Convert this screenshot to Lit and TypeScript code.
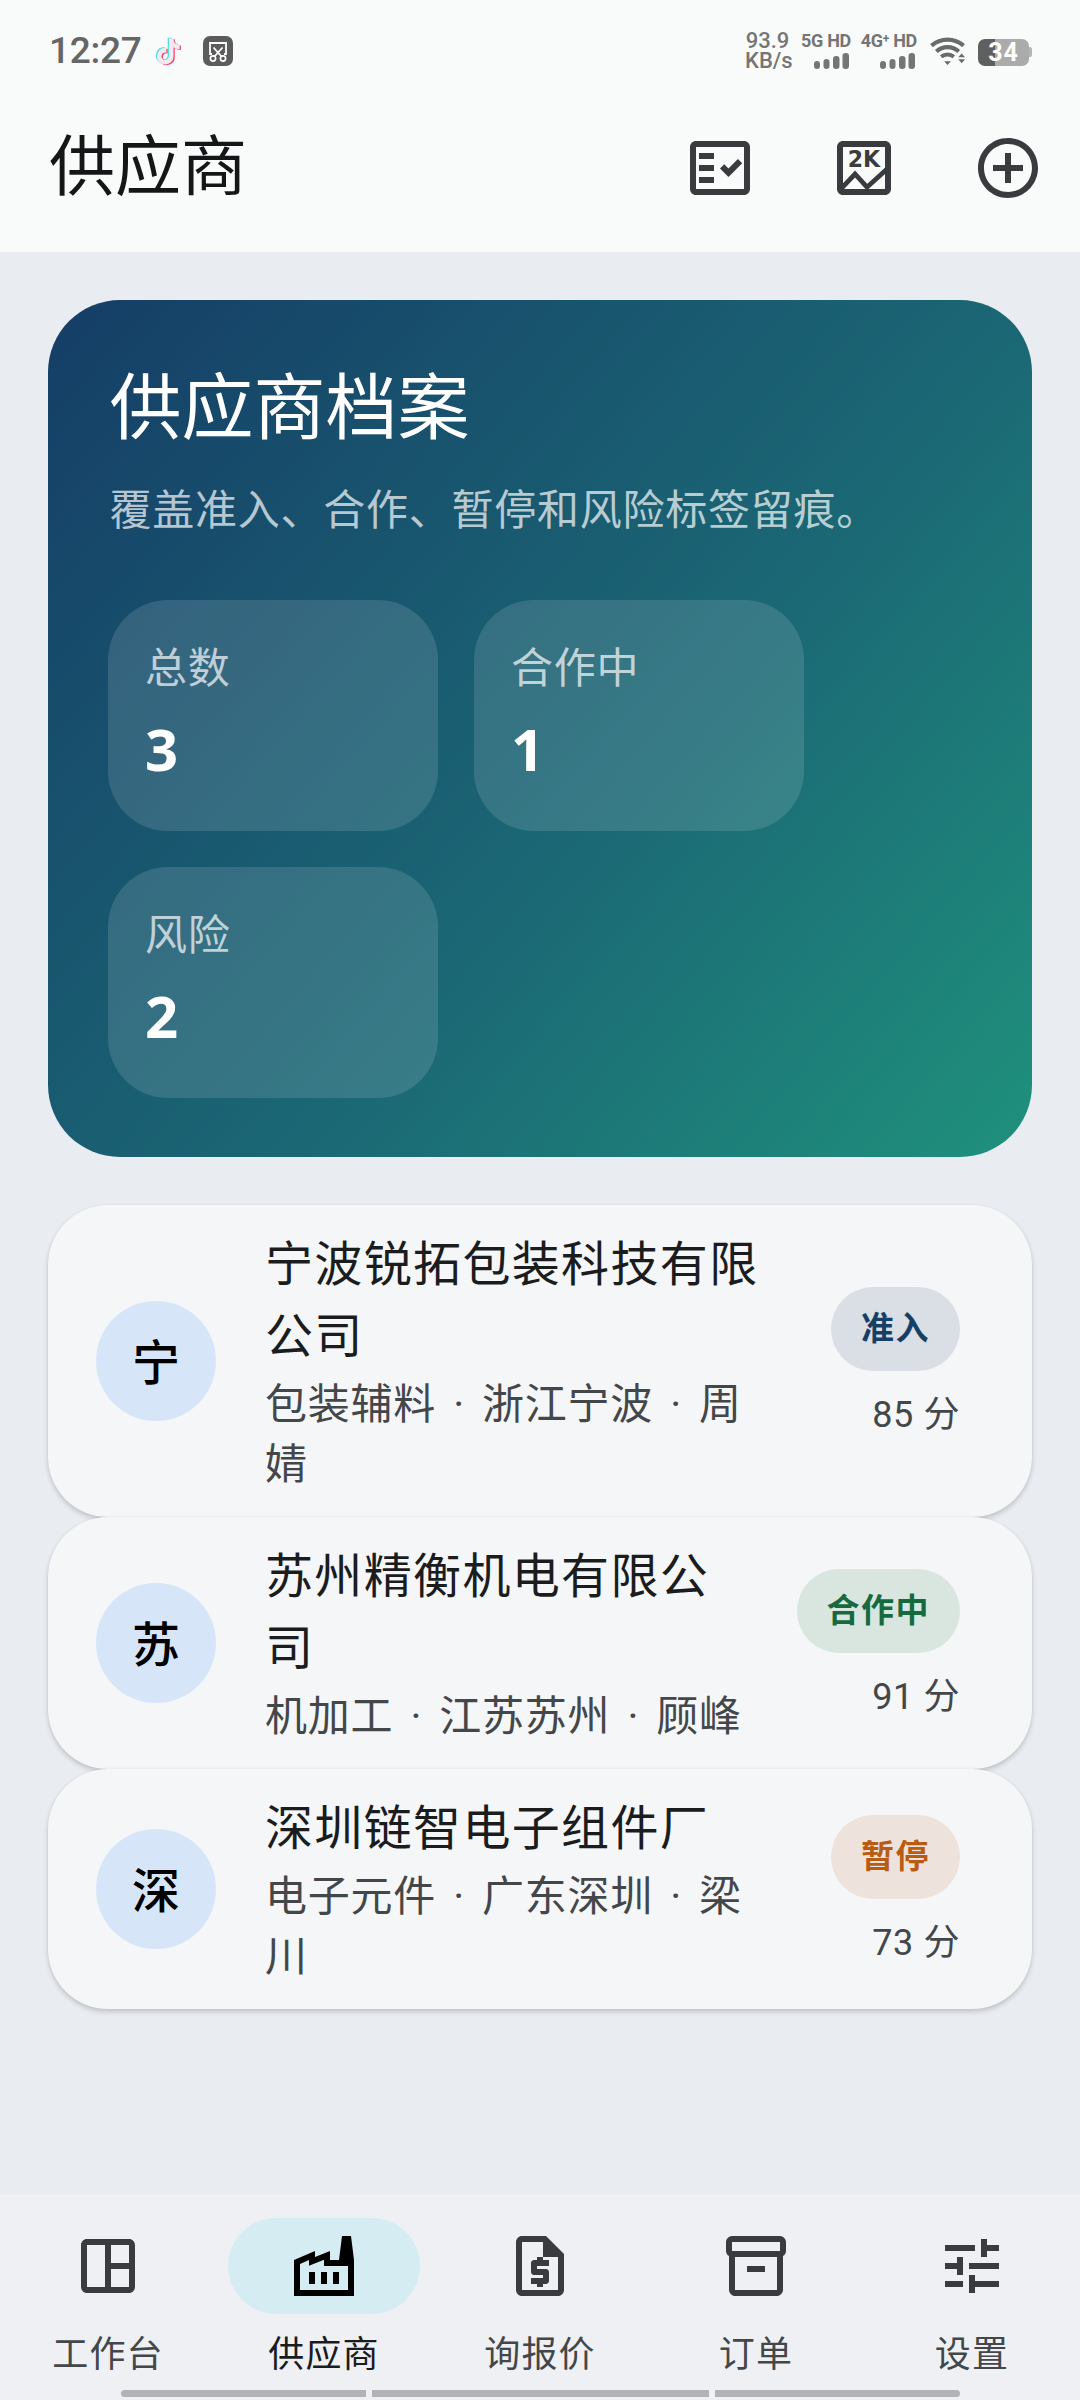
import { LitElement, html, css } from "lit";
import { customElement } from "lit/decorators.js";

const icon = (d: string, cls = "icon") => html`<svg class=${cls} viewBox="0 0 24 24"><path fill-rule="evenodd" d=${d}></path></svg>`;

const P = {
  fact: "M20 3H4C2.9 3 2 3.9 2 5v14c0 1.1.9 2 2 2h16c1.1 0 2-.9 2-2V5c0-1.1-.9-2-2-2zM20 19H4V5h16v14zM19.41 10.42L17.99 9l-3.17 3.17-1.41-1.42L12 12.16 14.83 15l4.58-4.58zM5 7h5v2H5zM5 11h5v2H5zM5 15h5v2H5z",
  add: "M13 7h-2v4H7v2h4v4h2v-4h4v-2h-4V7zM12 2C6.48 2 2 6.48 2 12s4.48 10 10 10 10-4.48 10-10S17.52 2 12 2zM12 20c-4.41 0-8-3.59-8-8s3.59-8 8-8 8 3.59 8 8-3.59 8-8 8z",
  dash: "M19 3H5c-1.1 0-2 .9-2 2v14c0 1.1.9 2 2 2h14c1.1 0 2-.9 2-2V5c0-1.1-.9-2-2-2zM5 5h6v14H5zM13 5h6v6h-6zM13 13h6v6h-6z",
  factory: "M22 22H2V10l7-3v2l5-2v3h3l1-8h3l1 8v12zM12 9.95l-5 2V10l-3 1.32V20h16v-8h-8V9.95zM11 18h2v-4h-2v4zM7 18h2v-4H7v4zM17 14h-2v4h2v-4z",
  quote: "M14 2H6C4.9 2 4.01 2.9 4.01 4L4 20c0 1.1.89 2 1.99 2H18c1.1 0 2-.9 2-2V8l-6-6zM6 20V4h7v5h5v11H6zM11 19h2v-1h1c.55 0 1-.45 1-1v-3c0-.55-.45-1-1-1h-3v-1h4v-2h-2V9h-2v1h-1c-.55 0-1 .45-1 1v3c0 .55.45 1 1 1h3v1H9v2h2v1z",
  box: "M20 2H4C3 2 2 3 2 4v3.01c0 .72.43 1.34 1 1.69V20c0 1.1 1.1 2 2 2h14c.9 0 2-.9 2-2V8.7c.57-.35 1-.97 1-1.69V4c0-1-1-2-2-2zM19 20H5V9h14v11zM20 7H4V4h16v3zM9 12h6v2H9z",
  tune: "M3 17v2h6v-2H3zM3 5v2h10V5H3zM13 21v-2h8v-2h-8v-2h-2v6h2zM7 9v2H3v2h4v2h2V9H7zM21 13v-2H11v2h10zM15 9h2V7h4V5h-4V3h-2v6z",
  note: "M19.59 6.69a4.83 4.83 0 0 1-3.77-4.25V2h-3.45v13.67a2.89 2.89 0 0 1-5.2 1.74 2.89 2.89 0 0 1 2.31-4.64 2.93 2.93 0 0 1 .88.13V9.4a6.84 6.84 0 0 0-1-.05A6.33 6.33 0 0 0 5 20.1a6.34 6.34 0 0 0 10.86-4.43v-7a8.16 8.16 0 0 0 4.77 1.52v-3.4a4.85 4.85 0 0 1-1-.1z",
};

const bars = html`<svg class="bars" viewBox="0 0 35 16"><rect x="0" y="8" width="6" height="8" rx="3"></rect><rect x="9.5" y="6" width="6" height="10" rx="3"></rect><rect x="19" y="3" width="6.5" height="13" rx="3"></rect><rect x="28.5" y="0" width="6.5" height="16" rx="3"></rect></svg>`;

interface Supplier { ch: string; name: string; sub: string; tag: string; tone: string; score: string; }
const suppliers: Supplier[] = [
  { ch: "宁", name: "宁波锐拓包装科技有限公司", sub: "包装辅料 · 浙江宁波 · 周婧", tag: "准入", tone: "blue", score: "85 分" },
  { ch: "苏", name: "苏州精衡机电有限公司", sub: "机加工 · 江苏苏州 · 顾峰", tag: "合作中", tone: "green", score: "91 分" },
  { ch: "深", name: "深圳链智电子组件厂", sub: "电子元件 · 广东深圳 · 梁川", tag: "暂停", tone: "orange", score: "73 分" },
];
const navs = [
  { d: P.dash, label: "工作台" },
  { d: P.factory, label: "供应商", active: true },
  { d: P.quote, label: "询报价" },
  { d: P.box, label: "订单" },
  { d: P.tune, label: "设置" },
];

@customElement("app-root")
export class AppRoot extends LitElement {
  static styles = css`
    :host { display: flex; flex-direction: column; width: 1080px; height: 2400px; background: #e9ecf1; overflow: hidden;
      font-family: Roboto, "Noto Sans CJK SC", sans-serif; color: #1a1c1e; }
    svg { display: block; flex: none; }
    .top { background: #f9fbfa; }
    .status { height: 84px; box-sizing: border-box; padding: 18px 48px 0 49px; display: flex; align-items: center; color: #666; }
    .time { font: 500 37px/44px Roboto, sans-serif; letter-spacing: -.3px; width: 104px; color: #666; }
    .tt { width: 31px; height: 31px; }
    .shot { width: 30px; height: 30px; margin-left: 19px; }
    .sright { margin-left: auto; display: flex; align-items: center; color: #757575; }
    .speed { font: 500 22px/20px Roboto, sans-serif; text-align: center; width: 45px; margin-right: 13px; }
    .sim { display: flex; flex-direction: column; align-items: flex-end; gap: 4px; font: 700 18px/16px Roboto, sans-serif; letter-spacing: -.3px; white-space: nowrap; }
    .sim.a { width: 48px; margin-right: 10px; }
    .sim.b { width: 56px; margin-right: 13px; }
    .sim sup { font-size: 12px; line-height: 0; vertical-align: 4px; }
    .bars { width: 35px; height: 16px; fill: #757575; margin-right: 2px; }
    .wifi { width: 37px; height: 30px; margin-right: 11px; }
    .batt { width: 54px; height: 28px; display: flex; align-items: center; margin-top: 2px; }
    .bbody { width: 51px; height: 27px; border-radius: 7px; overflow: hidden; background: linear-gradient(90deg, #5f5f5f 0 34%, #ababab 34% 100%);
      color: #fff; font: 700 25px/27px Roboto, sans-serif; text-align: center; letter-spacing: 1px; }
    .btip { width: 3px; height: 10px; background: #b5b5b5; border-radius: 0 2px 2px 0; }
    .appbar { height: 168px; display: flex; align-items: center; padding-left: 49px; }
    .appbar h1 { margin: 0; flex: 1; font-size: 66px; font-weight: 400; line-height: 88px; color: #141618; }
    .ib { width: 144px; height: 144px; display: flex; align-items: center; justify-content: center; }
    .icon { width: 72px; height: 72px; fill: #3a3b3e; }
    .k { font: 700 7.8px "DejaVu Sans", sans-serif; fill: #3a3b3e; }
    main { flex: 1; padding: 48px 48px 0; display: flex; flex-direction: column; }
    .hero { background: linear-gradient(131deg, #153d66 0%, #1b6875 58%, #1f917c 100%); border-radius: 72px; padding: 60px 60px 59px; margin-bottom: 48px; color: #fff; }
    .hero h2 { margin: 1px 0 0 1.5px; font-size: 72px; line-height: 96px; font-weight: 400; }
    .hero p { margin: 24px 0 59px 1.5px; font-size: 42px; line-height: 60px; letter-spacing: .75px; color: rgba(255,255,255,.7); }
    .stats { display: flex; flex-wrap: wrap; gap: 36px; width: 780px; }
    .stat { width: 330px; height: 231px; box-sizing: border-box; padding: 39px 36px 0 37px; border-radius: 60px; background: rgba(255,255,255,.125); }
    .stat .l { font-size: 42px; line-height: 60px; letter-spacing: .75px; color: rgba(255,255,255,.7); }
    .stat .v { font: 700 58px/84px "Noto Sans", sans-serif; margin-top: 8px; color: #fff; }
    .card { display: flex; align-items: center; padding: 24px 72px 24px 48px; background: #f4f6f8; border-radius: 60px;
      box-shadow: 0 3px 5px rgba(0,0,0,.16), 0 0 3px rgba(0,0,0,.06); position: relative; }
    .av { width: 120px; height: 120px; box-sizing: border-box; padding-bottom: 5px; border-radius: 50%; background: #d6e6f8; color: #000; display: flex; align-items: center; justify-content: center; font-size: 48px; font-weight: 500; margin-right: 49px; flex: none; }
    .txt { flex: 1; min-width: 0; margin-right: 54px; }
    .name { font-size: 48px; line-height: 72px; letter-spacing: 1.35px; color: #1a1c1e; }
    .sub { font-size: 42px; line-height: 60px; letter-spacing: .75px; color: #44474a; word-spacing: 6px; margin: 2px 0 -2px; }
    .tr { display: flex; flex-direction: column; align-items: flex-end; gap: 20px; flex: none; margin-top: 4px; }
    .tag { height: 84px; box-sizing: border-box; padding: 18px 30px; border-radius: 42px; font-size: 33px; line-height: 48px; letter-spacing: 1.5px; font-weight: 700; }
    .blue { background: #d9dfe5; color: #163f66; }
    .green { background: #d9e6df; color: #17693f; }
    .orange { background: #eee3dc; color: #b85c14; }
    .score { font-size: 36px; line-height: 48px; letter-spacing: .6px; color: #44474a; }
    nav { height: 204px; background: #eef0f3; display: flex; flex-direction: column; box-shadow: 0 -1px 0 #f1f3f5; }
    .items { display: flex; flex: 1; }
    .item { flex: 1; display: flex; flex-direction: column; align-items: center; padding-top: 22px; }
    .pill { width: 192px; height: 96px; border-radius: 48px; display: flex; align-items: center; justify-content: center; }
    .item.on .pill { background: #d5edf2; }
    .item.on .icon { fill: #000; }
    .lab { font-size: 36px; line-height: 48px; letter-spacing: 1.2px; color: #44474a; margin-top: 17px; }
    .item.on .lab { color: #1a1c1e; }
    .gest { display: flex; gap: 6px; justify-content: center; padding-bottom: 3px; }
    .gest i { height: 7px; background: #b3b3b5; display: block; }
    .gest i:first-child { border-radius: 4px 0 0 4px; width: 245px; }
    .gest i:nth-child(2) { width: 337px; }
    .gest i:last-child { border-radius: 0 4px 4px 0; width: 245px; }
  `;

  render() {
    return html`
      <div class="top">
        <div class="status">
          <div class="time">12:27</div>
          <svg class="tt" viewBox="0 0 24 24">
            <path d=${P.note} fill="#54dde4" transform="translate(-1 -.6)"></path>
            <path d=${P.note} fill="#f2436f" transform="translate(1 .6)"></path>
            <path d=${P.note} fill="#f4e9ee"></path>
          </svg>
          <svg class="shot" viewBox="0 0 30 30">
            <rect width="30" height="30" rx="7" fill="#5c5c5c"></rect>
            <path d="M9 18H7V7h16v11h-2M10.5 11.5l8 9M19.5 11.5l-8 9" fill="none" stroke="#fff" stroke-width="1.8"></path>
            <circle cx="10" cy="22.5" r="2.6" fill="none" stroke="#fff" stroke-width="1.6"></circle>
            <circle cx="20" cy="22.5" r="2.6" fill="none" stroke="#fff" stroke-width="1.6"></circle>
          </svg>
          <div class="sright">
            <div class="speed"><div>93.9</div><div>KB/s</div></div>
            <div class="sim a"><span>5G HD</span>${bars}</div>
            <div class="sim b"><span>4G<sup>+</sup> HD</span>${bars}</div>
            <svg class="wifi" viewBox="0 0 38 30">
              <path d="M1.5 9.5a25 25 0 0 1 33 0M6.5 15.5a17 17 0 0 1 23 0" fill="none" stroke="#6a6a6a" stroke-width="4.2"></path>
              <path d="M11.5 21a10 10 0 0 1 13 0" fill="none" stroke="#6a6a6a" stroke-width="4"></path>
              <path d="M14.5 25.5h7l-3.5 4zM29 21.5l3.5-4 3.5 4zM29 23.5h7l-3.5 4z" fill="#6a6a6a"></path>
            </svg>
            <div class="batt"><div class="bbody">34</div><div class="btip"></div></div>
          </div>
        </div>
        <div class="appbar">
          <h1>供应商</h1>
          <div class="ib">${icon(P.fact)}</div>
          <div class="ib">
            <svg class="icon" viewBox="0 0 24 24">
              <path fill-rule="evenodd" d="M5 3h14c1.1 0 2 .9 2 2v14c0 1.1-.9 2-2 2H5c-1.1 0-2-.9-2-2V5c0-1.1.9-2 2-2zM5 5v14h14V5z"></path>
              <path d="M4 19.3l5-5.3 4 4.4 6.6-6" fill="none" stroke="#3a3b3e" stroke-width="1.6"></path>
              <text class="k" x="6.6" y="11.7" textLength="10.8" lengthAdjust="spacingAndGlyphs">2K</text>
            </svg>
          </div>
          <div class="ib">${icon(P.add)}</div>
        </div>
      </div>
      <main>
        <section class="hero">
          <h2>供应商档案</h2>
          <p>覆盖准入、合作、暂停和风险标签留痕。</p>
          <div class="stats">
            <div class="stat"><div class="l">总数</div><div class="v">3</div></div>
            <div class="stat"><div class="l">合作中</div><div class="v">1</div></div>
            <div class="stat"><div class="l">风险</div><div class="v">2</div></div>
          </div>
        </section>
        ${suppliers.map((s) => html`
          <div class="card">
            <div class="av">${s.ch}</div>
            <div class="txt"><div class="name">${s.name}</div><div class="sub">${s.sub}</div></div>
            <div class="tr"><div class="tag ${s.tone}">${s.tag}</div><div class="score">${s.score}</div></div>
          </div>`)}
      </main>
      <nav>
        <div class="items">
          ${navs.map((n) => html`
            <div class="item ${n.active ? "on" : ""}">
              <div class="pill">${icon(n.d)}</div>
              <div class="lab">${n.label}</div>
            </div>`)}
        </div>
        <div class="gest"><i></i><i></i><i></i></div>
      </nav>
    `;
  }
}
